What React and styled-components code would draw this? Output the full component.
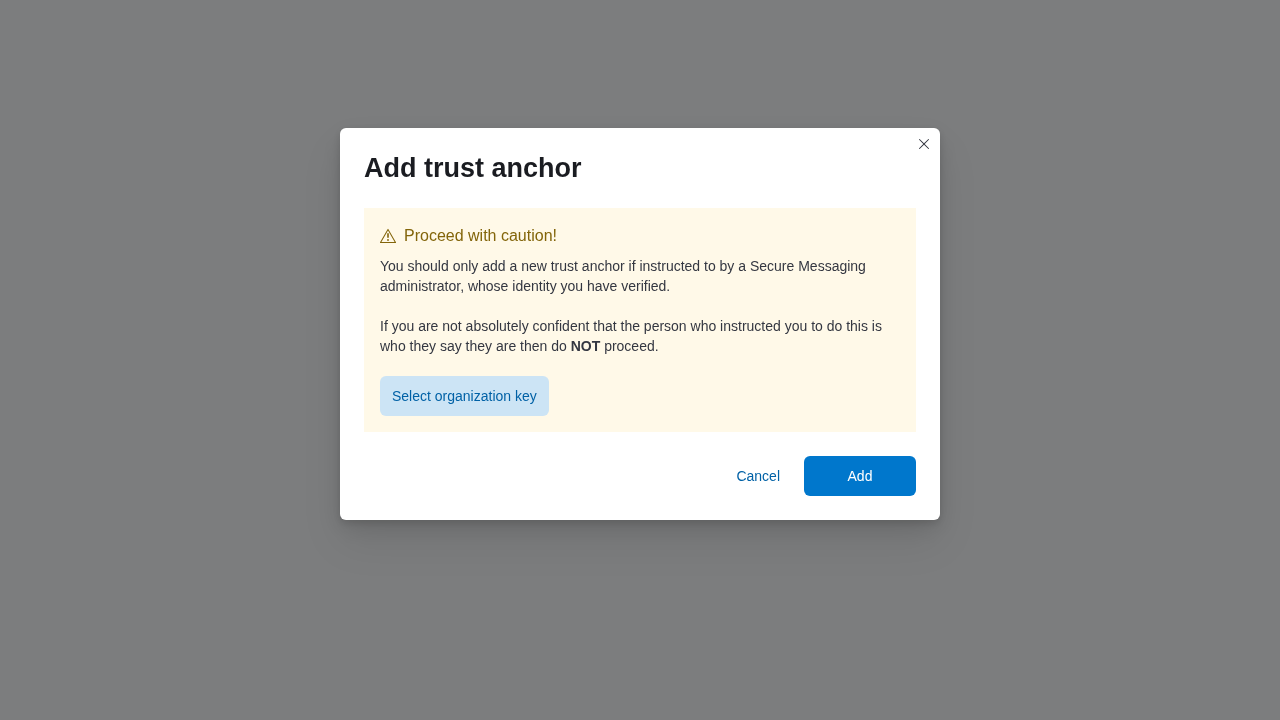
import React from "react";
import styled, { createGlobalStyle } from "styled-components";

const GlobalStyle = createGlobalStyle`
  *, *::before, *::after { box-sizing: border-box; }
  body {
    margin: 0;
    font-family: "Liberation Sans", Arial, sans-serif;
    font-size: 14px;
    line-height: 20px;
    color: #343741;
  }
`;

const Overlay = styled.div`
  display: flex;
  justify-content: center;
  align-items: flex-start;
  min-height: 100vh;
  padding: 128px 16px 32px;
  background: #7c7d7e;
`;

const Dialog = styled.section`
  position: relative;
  width: 100%;
  max-width: 600px;
  padding: 24px;
  border-radius: 6px;
  background: #fff;
  will-change: transform, opacity;
  box-shadow:
    0 3px 9px rgba(0, 0, 0, 0.13),
    0 9px 24px rgba(0, 0, 0, 0.09),
    0 22px 43px rgba(0, 0, 0, 0.08);
`;

const CloseButton = styled.button`
  position: absolute;
  top: 4px;
  right: 4px;
  display: flex;
  align-items: center;
  justify-content: center;
  width: 24px;
  height: 24px;
  padding: 0;
  border: 0;
  background: none;
  color: #343741;
  cursor: pointer;
`;

const Title = styled.h1`
  margin: 0 0 24px;
  font-size: 27px;
  line-height: 32px;
  font-weight: 700;
  color: #1a1c21;
`;

const Callout = styled.div`
  padding: 16px;
  background: #fff9e8;
`;

const CalloutTitle = styled.h2`
  display: flex;
  align-items: center;
  gap: 8px;
  margin: 0 0 8px;
  font-size: 16px;
  line-height: 24px;
  font-weight: 400;
  color: #83650a;
`;

const Paragraph = styled.p`
  margin: 0 0 20px;
`;

const Button = styled.button`
  height: 40px;
  min-width: ${({ $wide }) => ($wide ? "112px" : "0")};
  padding: 0 12px;
  border: 0;
  border-radius: 6px;
  font: inherit;
  color: ${({ $kind }) => ($kind === "primary" ? "#fff" : "#0061a6")};
  background: ${({ $kind }) =>
    ({ primary: "#0077cc", soft: "#cce4f5", plain: "transparent" })[$kind]};
  cursor: pointer;
`;

const Footer = styled.footer`
  display: flex;
  justify-content: flex-end;
  gap: 12px;
  margin-top: 24px;
`;

const CrossIcon = () => (
  <svg width="16" height="16" viewBox="0 0 16 16" fill="currentColor" aria-hidden="true">
    <path d="M7.293 8 3.146 3.854a.5.5 0 1 1 .708-.708L8 7.293l4.146-4.147a.5.5 0 0 1 .708.708L8.707 8l4.147 4.146a.5.5 0 0 1-.708.708L8 8.707l-4.146 4.147a.5.5 0 0 1-.708-.708L7.293 8Z" />
  </svg>
);

const WarningIcon = () => (
  <svg width="16" height="16" viewBox="0 0 16 16" fill="currentColor" aria-hidden="true">
    <path
      fillRule="evenodd"
      d="M7.55 1.2a.53.53 0 0 1 .9 0l7.5 13a.53.53 0 0 1-.45.8H.5a.53.53 0 0 1-.45-.8l7.5-13ZM8 2.5 1.4 14h13.2L8 2.5Z"
    />
    <path d="M7.2 5.2h1.6v4.6H7.2z" />
    <circle cx="8" cy="12" r=".9" />
  </svg>
);

export default function App() {
  return (
    <>
      <GlobalStyle />
      <Overlay>
        <Dialog role="dialog" aria-modal="true" aria-labelledby="dialog-title">
          <CloseButton type="button" aria-label="Close">
            <CrossIcon />
          </CloseButton>
          <Title id="dialog-title">Add trust anchor</Title>
          <Callout>
            <CalloutTitle>
              <WarningIcon />
              Proceed with caution!
            </CalloutTitle>
            <Paragraph>
              You should only add a new trust anchor if instructed to by a Secure Messaging
              administrator, whose identity you have verified.
            </Paragraph>
            <Paragraph>
              If you are not absolutely confident that the person who instructed you to do this is
              who they say they are then do <strong>NOT</strong> proceed.
            </Paragraph>
            <Button type="button" $kind="soft">Select organization key</Button>
          </Callout>
          <Footer>
            <Button type="button" $kind="plain">Cancel</Button>
            <Button type="button" $kind="primary" $wide>Add</Button>
          </Footer>
        </Dialog>
      </Overlay>
    </>
  );
}
